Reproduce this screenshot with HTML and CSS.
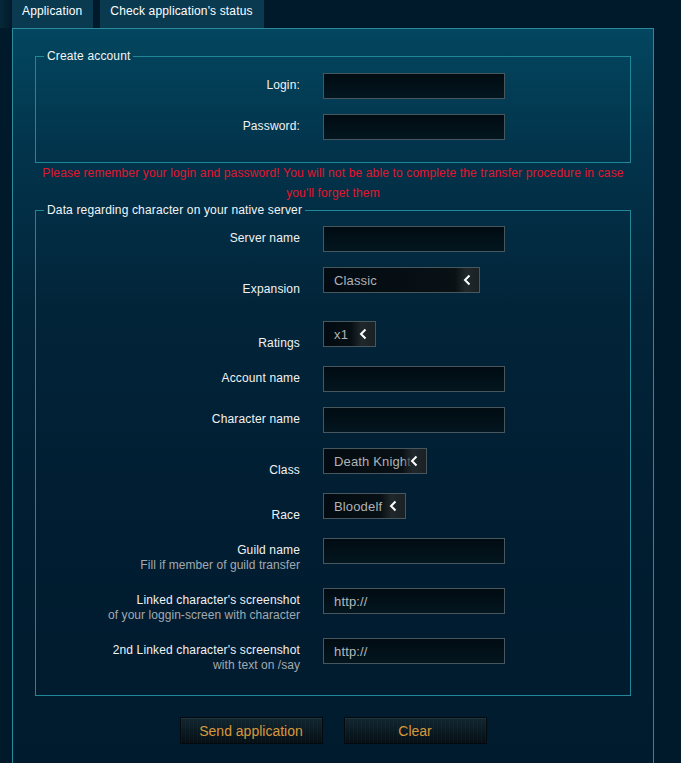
FILE: index.html
```html
<!DOCTYPE html>
<html lang="en">
<head>
    <meta charset="UTF-8">
    <meta name="viewport" content="width=device-width, initial-scale=1.0">
    <title>Character transfer</title>
    <link rel="stylesheet" href="styles.css">
</head>
<body>
    <div class="tabs">
        <a class="tab active" href="#">Application</a>
        <a class="tab" href="#">Check application's status</a>
    </div>

    <form class="panel">
        <fieldset class="account">
            <legend>Create account</legend>
            <div class="row">
                <label class="label">Login:</label>
                <input class="field" type="text">
            </div>
            <div class="row">
                <label class="label">Password:</label>
                <input class="field" type="password">
            </div>
        </fieldset>

        <p class="notice">Please remember your login and password! You will not be able to complete the transfer procedure in case you'll forget them</p>

        <fieldset class="character">
            <legend>Data regarding character on your native server</legend>
            <div class="row">
                <label class="label">Server name</label>
                <input class="field" type="text">
            </div>
            <div class="row row-select">
                <label class="label">Expansion</label>
                <div class="select select-expansion">
                    <span class="value">Classic</span>
                    <span class="arrow"><svg width="8" height="12" viewBox="0 0 8 12"><path d="M6.5 1.5 2 6l4.5 4.5" fill="none" stroke="#fff" stroke-width="2"/></svg></span>
                </div>
            </div>
            <div class="row row-select row-gap">
                <label class="label">Ratings</label>
                <div class="select select-ratings">
                    <span class="value">x1</span>
                    <span class="arrow"><svg width="8" height="12" viewBox="0 0 8 12"><path d="M6.5 1.5 2 6l4.5 4.5" fill="none" stroke="#fff" stroke-width="2"/></svg></span>
                </div>
            </div>
            <div class="row">
                <label class="label">Account name</label>
                <input class="field" type="text">
            </div>
            <div class="row">
                <label class="label">Character name</label>
                <input class="field" type="text">
            </div>
            <div class="row row-select">
                <label class="label">Class</label>
                <div class="select select-class">
                    <span class="value">Death Knight</span>
                    <span class="arrow"><svg width="8" height="12" viewBox="0 0 8 12"><path d="M6.5 1.5 2 6l4.5 4.5" fill="none" stroke="#fff" stroke-width="2"/></svg></span>
                </div>
            </div>
            <div class="row row-select">
                <label class="label">Race</label>
                <div class="select select-race">
                    <span class="value">Bloodelf</span>
                    <span class="arrow"><svg width="8" height="12" viewBox="0 0 8 12"><path d="M6.5 1.5 2 6l4.5 4.5" fill="none" stroke="#fff" stroke-width="2"/></svg></span>
                </div>
            </div>
            <div class="row">
                <label class="label">Guild name<small>Fill if member of guild transfer</small></label>
                <input class="field" type="text">
            </div>
            <div class="row">
                <label class="label">Linked character's screenshot<small>of your loggin-screen with character</small></label>
                <input class="field" type="text" value="http://">
            </div>
            <div class="row">
                <label class="label">2nd Linked character's screenshot<small>with text on /say</small></label>
                <input class="field" type="text" value="http://">
            </div>
        </fieldset>

        <div class="actions">
            <button type="button" class="btn">Send application</button>
            <button type="reset" class="btn">Clear</button>
        </div>
    </form>
</body>
</html>
```

FILE: styles.css
```css
body {
    margin: 0;
    background: #011a2b;
    font-family: "Liberation Sans", Arial, sans-serif;
    font-size: 12px;
    letter-spacing: 0.15px;
    color: #f0f0f0;
}

.tabs {
    display: flex;
    gap: 7px;
    height: 28px;
    padding-left: 12px;
    background: linear-gradient(90deg, #062838 0, #011a2b 12px);
}

.tab {
    padding: 4px 11px 0 10px;
    line-height: 14px;
    background: #0a3a50;
    color: #fff;
    text-decoration: none;
}

.panel {
    width: 640px;
    margin: 0 0 0 12px;
    padding: 20px 0 40px;
    border: 1px solid #2a8b9c;
    background: linear-gradient(#03465f 0, #02344c 120px, #022439 280px, #011d31 500px, #011b2e 100%);
}

fieldset {
    margin: 0 22px;
    padding: 0 0 22px;
    border: 1px solid #1f8797;
    min-width: 0;
}

legend {
    margin-left: 8px;
    padding: 0 3px;
    line-height: 14px;
    color: #f4f4f4;
}

.row {
    display: flex;
    align-items: flex-start;
    margin-top: 15px;
}

.row:first-of-type {
    margin-top: 10px;
}

.character .row:first-of-type {
    margin-top: 9px;
}

.row-gap {
    margin-top: 24px;
}

.label {
    flex-shrink: 0;
    width: 264px;
    padding-top: 5px;
    line-height: 15px;
    text-align: right;
    color: #f2f2f2;
}

.label small {
    display: block;
    font-size: 12px;
    letter-spacing: 0.05px;
    color: #a2aab0;
}

.row-select .label {
    padding-top: 15px;
}

.field {
    box-sizing: border-box;
    width: 182px;
    height: 26px;
    margin: 0 0 0 23px;
    padding: 0 10px;
    border: 1px solid #48575e;
    background: linear-gradient(#010b12, #03161f);
    color: #b3b9bd;
    font-family: inherit;
    font-size: 13px;
    letter-spacing: inherit;
    outline: none;
}

.select {
    box-sizing: border-box;
    display: flex;
    align-items: center;
    height: 26px;
    margin-left: 23px;
    padding-left: 10px;
    border: 1px solid #48575e;
    background: linear-gradient(90deg, #020b11, #0a1216);
    color: #aeb3b7;
    font-size: 13px;
    overflow: hidden;
}

.select .value {
    flex: 1;
    min-width: 0;
    white-space: nowrap;
}

.select .arrow {
    flex-shrink: 0;
    display: flex;
    align-items: center;
    justify-content: center;
    align-self: stretch;
    width: 24px;
    margin-left: -6px;
    background: linear-gradient(90deg, rgba(28, 35, 39, 0), #20282c 45%, #192125);
}

.select-expansion { width: 157px; }
.select-ratings { width: 53px; }
.select-class { width: 104px; }
.select-race { width: 83px; }

.notice {
    margin: 0 22px;
    line-height: 20px;
    text-align: center;
    color: #e4152c;
}

.actions {
    display: flex;
    justify-content: center;
    gap: 21px;
    margin-top: 21px;
}

.btn {
    width: 143px;
    height: 27px;
    border: 1px solid #03090d;
    background:
        repeating-linear-gradient(90deg, rgba(255, 255, 255, 0.025) 0 1px, transparent 1px 4px),
        linear-gradient(#12262f, #0b1b23 50%, #050f15);
    box-shadow: inset 0 1px 0 rgba(120, 160, 170, 0.12);
    color: #d9983c;
    font-family: inherit;
    font-size: 14px;
    cursor: pointer;
}

.btn:hover {
    color: #f0b050;
}
```
